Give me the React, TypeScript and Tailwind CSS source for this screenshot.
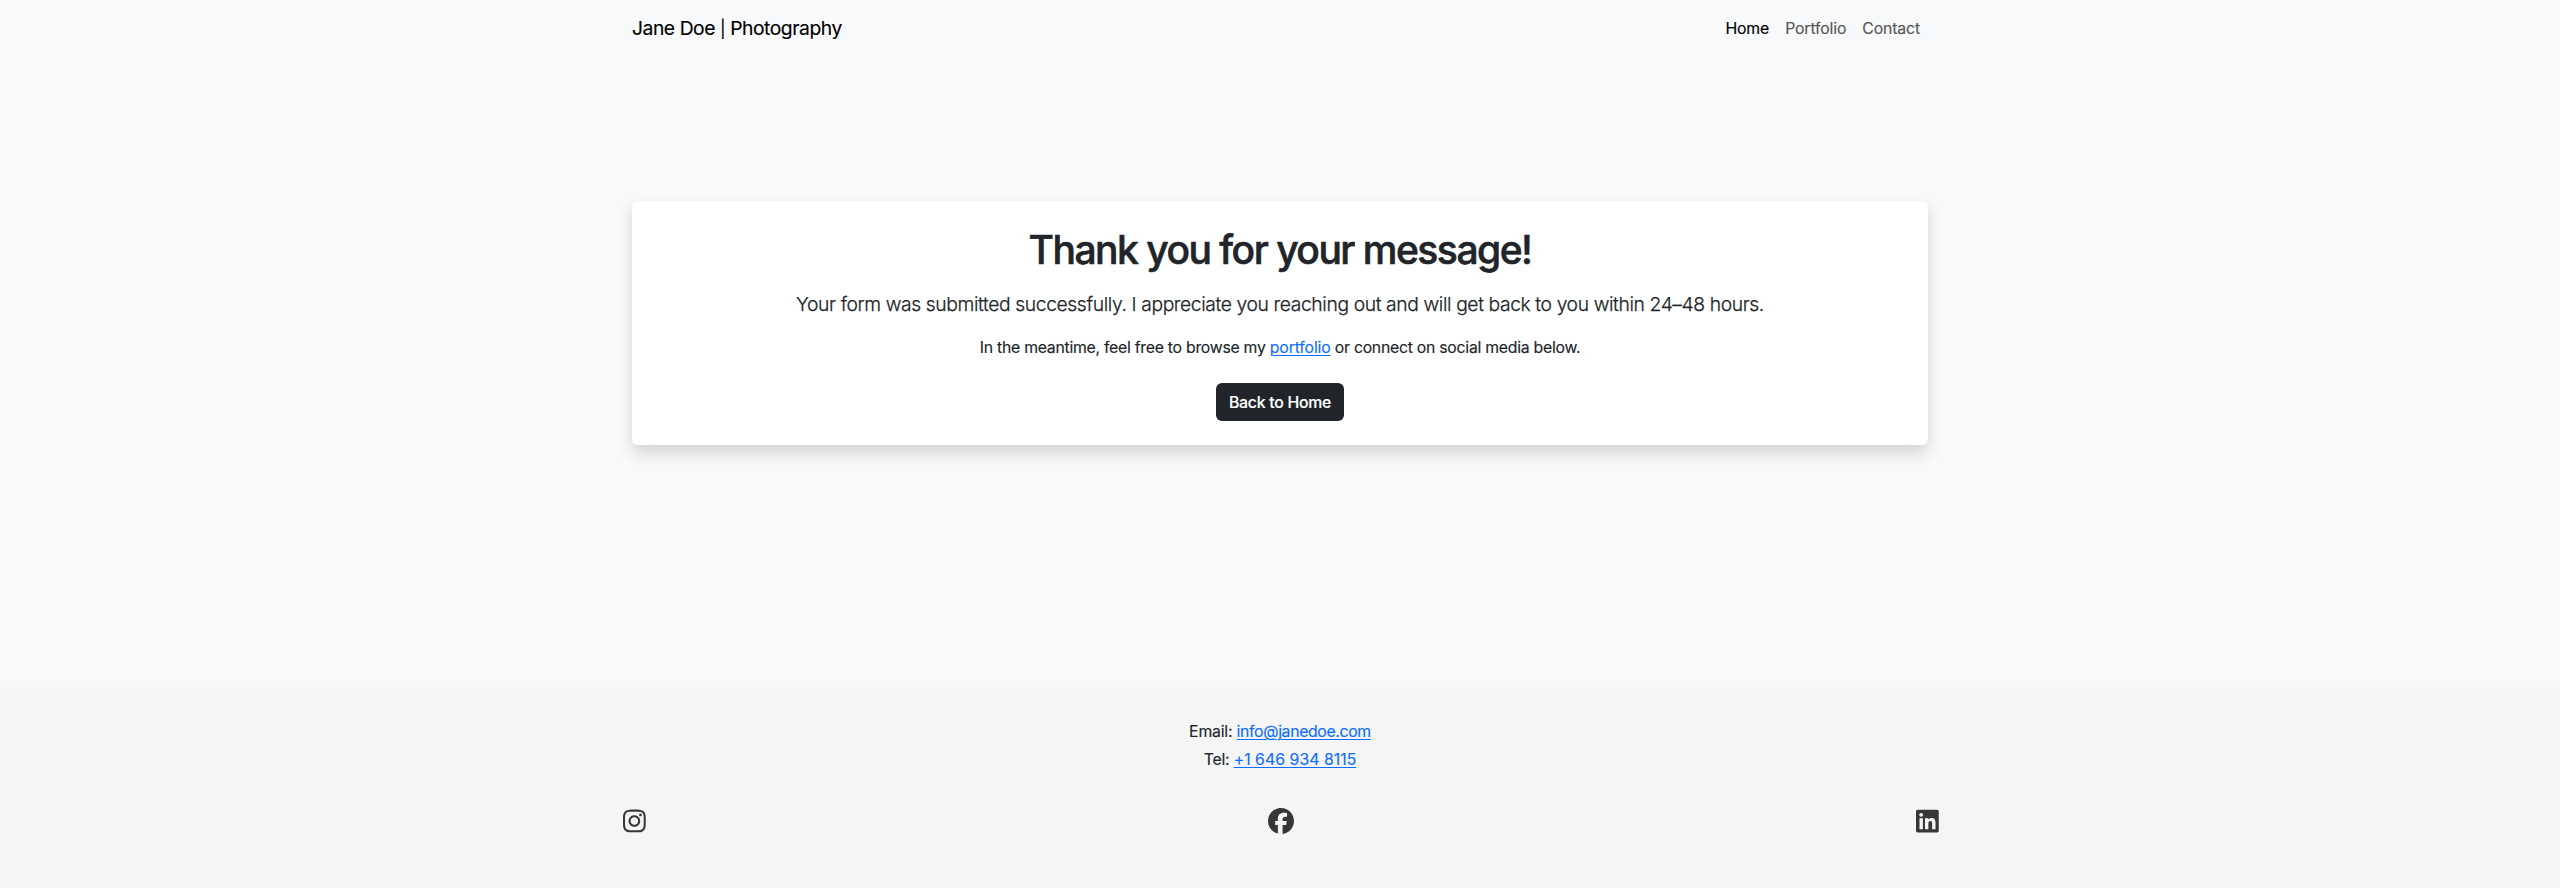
import React from "react";
import { FaInstagram, FaFacebook, FaLinkedin } from "react-icons/fa6";

const link = "text-[#0d6efd] underline underline-offset-2 decoration-1";

export default function App() {
  return (
    <div className="flex h-[888px] flex-col bg-[#f8f9fb] font-['Inter',sans-serif] text-[15.8px] leading-6 text-[#212529] [-webkit-text-stroke:0.15px]">
      <nav className="mx-auto flex h-14 w-[1296px] items-center justify-between">
        <a className="text-[19.3px] leading-[30px] tracking-[-0.45px] text-black">
          Jane Doe <span className="text-[17px]">|</span> Photography
        </a>
        <div className="flex pt-px tracking-[-0.14px]">
          <a className="px-2 text-black">Home</a>
          <a className="px-2 text-[#565757]">Portfolio</a>
          <a className="px-2 text-[#565757]">Contact</a>
        </div>
      </nav>
      <main className="flex flex-1 flex-col items-center pt-[145px]">
        <section className="flex w-[1296px] flex-col items-center rounded-md bg-white px-6 pt-[25px] pb-6 shadow-[0_8px_16px_rgba(0,0,0,0.15)]">
          <h1 className="mb-[15px] text-[39px] leading-[48px] font-medium tracking-[-1.5px] [-webkit-text-stroke:0.6px]">Thank you for your message!</h1>
          <p className="mb-[17px] text-[19.3px] leading-[30px] font-light tracking-[-0.39px] [-webkit-text-stroke:0.25px]">
            Your form was submitted successfully. I appreciate you reaching out and will get back to you within 24–48 hours.
          </p>
          <p className="mb-[23px] tracking-[-0.26px]">
            In the meantime, feel free to browse my <a className={`${link} tracking-[-0.14px]`}>portfolio</a> or connect on social media below.
          </p>
          <button className="h-[38px] w-32 rounded-md bg-[#212529] pt-px text-center font-medium tracking-[-0.25px] text-white">Back to Home</button>
        </section>
      </main>
      <footer className="flex h-[201px] flex-col items-center bg-[#f5f5f5] pt-[31px]">
        <p className="leading-7 tracking-[-0.2px]">Email: <a className={`${link} tracking-[-0.34px]`}>info@janedoe.com</a></p>
        <p className="leading-7 tracking-[-0.2px]">Tel: <a className={`${link} tracking-[0.05px]`}>+1 646 934 8115</a></p>
        <div className="mt-[33.5px] ml-0.5 flex w-[1316px] items-center justify-between text-[#373737]">
          <FaInstagram className="h-[26px] w-[22.75px]" />
          <FaFacebook className="h-[26px] w-[26px]" />
          <FaLinkedin className="h-[26px] w-[22.75px]" />
        </div>
      </footer>
    </div>
  );
}
